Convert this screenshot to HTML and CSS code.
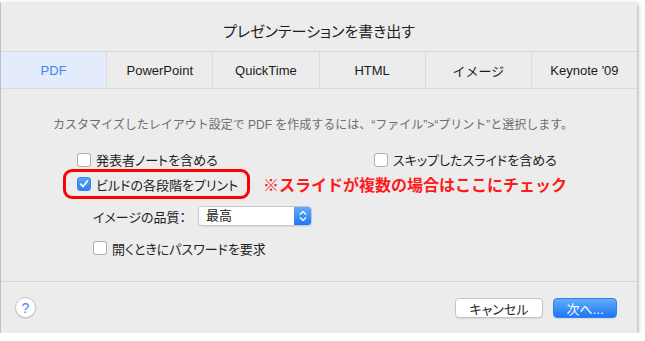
FILE: index.html
```html
<!DOCTYPE html>
<html lang="ja">
<head>
    <meta charset="UTF-8">
    <title>プレゼンテーションを書き出す</title>
    <link rel="stylesheet" href="styles.css">
</head>
<body>
    <div class="dialog">
        <div class="dialog-title">プレゼンテーションを書き出す</div>

        <div class="tabs">
            <div class="tab selected">PDF</div>
            <div class="tab">PowerPoint</div>
            <div class="tab">QuickTime</div>
            <div class="tab">HTML</div>
            <div class="tab">イメージ</div>
            <div class="tab">Keynote '09</div>
        </div>

        <div class="panel">
            <p class="note">カスタマイズしたレイアウト設定で PDF を作成するには、“ファイル”&gt;“プリント”と選択します。</p>

            <div class="row row-first">
                <label class="check col-left"><span class="box"></span>発表者ノートを含める</label>
                <label class="check"><span class="box"></span>スキップしたスライドを含める</label>
            </div>

            <div class="row row-marked">
                <span class="marker">
                    <label class="check"><span class="box checked">
                        <svg width="10" height="10" viewBox="0 0 10 10"><path d="M1.8 5.2 L4 7.6 L8.4 2" fill="none" stroke="#fff" stroke-width="1.6" stroke-linecap="round" stroke-linejoin="round"/></svg>
                    </span>ビルドの各段階をプリント</label>
                </span>
                <span class="annotation">※スライドが複数の場合はここにチェック</span>
            </div>

            <div class="row row-quality">
                <span class="field-label">イメージの品質：</span>
                <div class="select">
                    <span class="select-value">最高</span>
                    <span class="stepper">
                        <svg width="8" height="12" viewBox="0 0 8 12"><path d="M1.2 4.2 L4 1.6 L6.8 4.2 M1.2 7.8 L4 10.4 L6.8 7.8" fill="none" stroke="#fff" stroke-width="1.3" stroke-linecap="round" stroke-linejoin="round"/></svg>
                    </span>
                </div>
            </div>

            <div class="row row-password">
                <label class="check"><span class="box"></span>開くときにパスワードを要求</label>
            </div>
        </div>

        <div class="footer">
            <span class="help">?</span>
            <div class="buttons">
                <button class="btn">キャンセル</button>
                <button class="btn btn-default">次へ...</button>
            </div>
        </div>
    </div>
</body>
</html>
```

FILE: styles.css
```css
body {
    margin: 0;
    padding-top: 2px;
    background: #ffffff;
    font-family: "Liberation Sans", "Noto Sans CJK JP", sans-serif;
    color: #222;
}
.dialog {
    width: 636px;
    height: 331px;
    background-color: #ececec;
    border-left: 1px solid #c2c2c2;
    box-shadow: 1px 2px 4px rgba(0,0,0,0.35);
    display: flex;
    flex-direction: column;
}
.dialog-title {
    height: 42px;
    padding-top: 7px;
    display: flex;
    align-items: center;
    justify-content: center;
    font-size: 15px;
    font-feature-settings: "palt";
    color: #1e1e1e;
}
.tabs {
    display: flex;
    height: 36px;
    border-top: 1px solid #dadada;
    border-bottom: 1px solid #dadada;
}
.tab {
    flex: 1;
    display: flex;
    align-items: center;
    justify-content: center;
    font-size: 13px;
    color: #1a1a1a;
    border-left: 1px solid #dadada;
}
.tab:first-child {
    border-left: none;
}
.tab.selected {
    background-color: #e3ebfc;
    color: #3f86f4;
}
.panel {
    height: 192px;
    padding-top: 28px;
    box-sizing: border-box;
}
.note {
    margin: 0 0 17px 52px;
    font-size: 12px;
    line-height: 16px;
    color: #6e6e6e;
}
.row {
    display: flex;
    align-items: center;
    padding-left: 76px;
    font-size: 13px;
    font-feature-settings: "palt";
}
.row-first {
    height: 19px;
}
.col-left {
    width: 297px;
}
.check {
    display: flex;
    align-items: center;
}
.box {
    width: 12px;
    height: 12px;
    border: 1px solid #b1b1b1;
    border-radius: 3px;
    background: #fff;
    margin-right: 5px;
    display: flex;
    align-items: center;
    justify-content: center;
}
.box.checked {
    border-color: #3a87f2;
    background: linear-gradient(#5aa3f8, #2e7ff3);
}
.row-marked {
    height: 30px;
}
.marker {
    display: flex;
    align-items: center;
    height: 24px;
    margin-left: -14px;
    padding: 0 9px 0 11px;
    border: 3px solid #ff0000;
    border-radius: 9px;
}
.annotation {
    margin-left: 13px;
    font-size: 16px;
    font-weight: bold;
    color: #ff1a1a;
    font-feature-settings: normal;
}
.row-quality {
    height: 24px;
    margin-top: 5px;
    padding-left: 92px;
}
.field-label {
    width: 105px;
}
.select {
    width: 112px;
    height: 18px;
    display: flex;
    background: #fff;
    border: 1px solid #c8c8c8;
    border-radius: 4px;
    overflow: hidden;
    box-shadow: 0 1px 1px rgba(0,0,0,0.08);
}
.select-value {
    flex: 1;
    padding-left: 7px;
    line-height: 18px;
}
.stepper {
    width: 17px;
    display: flex;
    align-items: center;
    justify-content: center;
    background: linear-gradient(#62abfa, #1c79f5);
}
.row-password {
    height: 20px;
    margin-top: 10px;
    padding-left: 92px;
}
.footer {
    flex: 1;
    display: flex;
    align-items: center;
    border-top: 1px solid #d6d6d6;
    padding: 0 20px 0 14px;
}
.help {
    width: 19px;
    height: 19px;
    border: 1px solid #c6c6c6;
    border-radius: 50%;
    background: #fff;
    color: #3a8af5;
    font-size: 14px;
    display: flex;
    align-items: center;
    justify-content: center;
    box-shadow: 0 1px 1px rgba(0,0,0,0.1);
}
.buttons {
    margin-left: auto;
    display: flex;
    gap: 10px;
}
.btn {
    height: 20px;
    width: 88px;
    padding: 0;
    font-family: inherit;
    font-size: 13px;
    font-feature-settings: "palt";
    color: #1e1e1e;
    background: #fff;
    border: 1px solid #c4c4c4;
    border-radius: 4px;
    box-shadow: 0 1px 1px rgba(0,0,0,0.08);
}
.btn-default {
    width: 64px;
    color: #fff;
    border-color: #2d7ff2;
    background: linear-gradient(#63acfa, #1b78f4);
}
```
